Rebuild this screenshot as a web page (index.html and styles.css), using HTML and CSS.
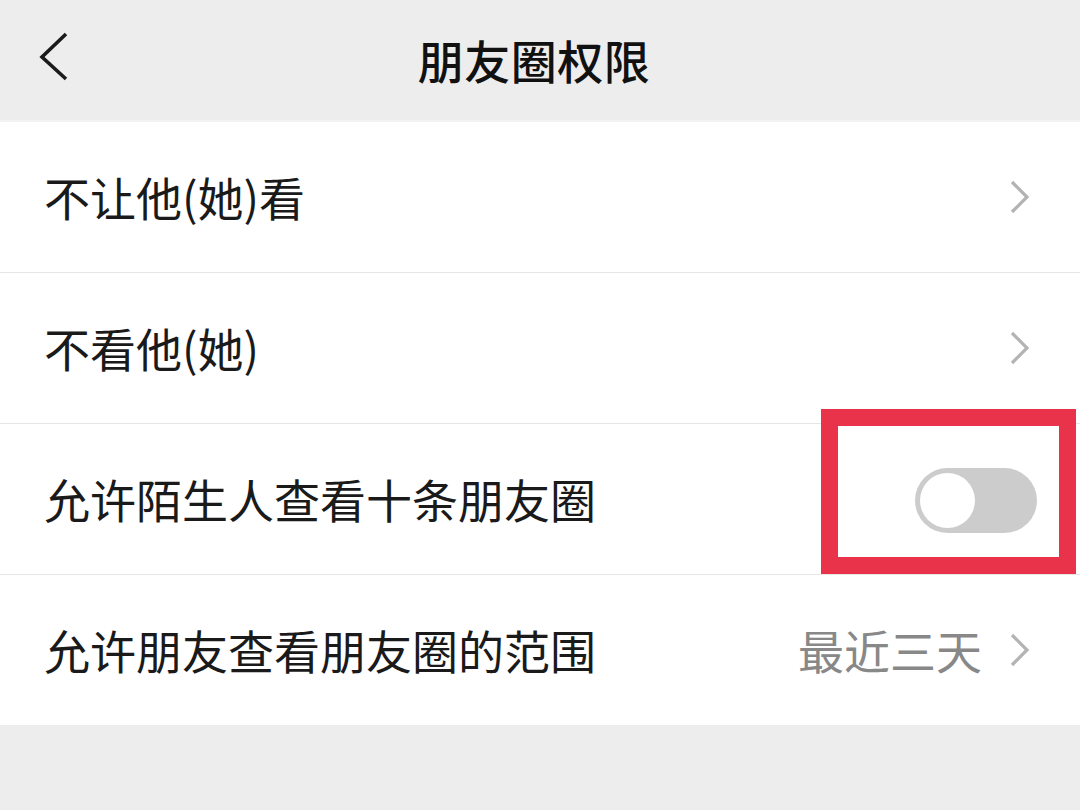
FILE: index.html
```html
<!DOCTYPE html>
<html lang="zh-CN">
<head>
    <meta charset="UTF-8">
    <meta name="viewport" content="width=device-width, initial-scale=1.0">
    <title>朋友圈权限</title>
    <link rel="stylesheet" href="styles.css">
</head>
<body>
    <header class="top-bar">
        <span class="back">
            <svg width="40" height="60" viewBox="0 0 40 60">
                <polyline points="27,13 3,36 27,58" fill="none" stroke="#1b1b1b" stroke-width="3.6" stroke-linejoin="miter"/>
            </svg>
        </span>
        <h1>朋友圈权限</h1>
    </header>

    <div class="list">
        <div class="row">
            <span class="label">不让他(她)看</span>
            <span class="arrow">
                <svg width="24" height="40" viewBox="0 0 24 40">
                    <polyline points="4,5 19,20 4,35" fill="none" stroke="#b3b3b3" stroke-width="3.2"/>
                </svg>
            </span>
        </div>
        <div class="row">
            <span class="label">不看他(她)</span>
            <span class="arrow">
                <svg width="24" height="40" viewBox="0 0 24 40">
                    <polyline points="4,5 19,20 4,35" fill="none" stroke="#b3b3b3" stroke-width="3.2"/>
                </svg>
            </span>
        </div>
        <div class="row row-switch">
            <span class="label">允许陌生人查看十条朋友圈</span>
            <span class="switch"><span class="knob"></span></span>
            <span class="highlight"></span>
        </div>
        <div class="row">
            <span class="label">允许朋友查看朋友圈的范围</span>
            <span class="value">最近三天</span>
            <span class="arrow">
                <svg width="24" height="40" viewBox="0 0 24 40">
                    <polyline points="4,5 19,20 4,35" fill="none" stroke="#b3b3b3" stroke-width="3.2"/>
                </svg>
            </span>
        </div>
    </div>
</body>
</html>
```

FILE: styles.css
```css
body {
    margin: 0;
    background-color: #ededed;
    font-family: "Noto Sans CJK SC", "Noto Sans", sans-serif;
    color: #1a1a1a;
    overflow: hidden;
}
.top-bar {
    height: 120px;
    border-bottom: 2px solid #f3f3f3;
    display: flex;
    align-items: center;
    justify-content: center;
    position: relative;
}
.top-bar h1 {
    margin: 0 12px 0 0;
    font-size: 46px;
    font-weight: 500;
    color: #111;
    letter-spacing: 0.5px;
    margin-top: -2px;
}
.back {
    position: absolute;
    left: 39px;
    top: 21px;
}
.list {
    background-color: #fff;
}
.row {
    height: 150px;
    display: flex;
    align-items: center;
    padding: 0 46px 0 44px;
    position: relative;
    border-bottom: 1px solid #e6e6e6;
}
.row:last-child {
    border-bottom: none;
}
.label {
    flex: 1;
    font-size: 46px;
    color: #1a1a1a;
    margin-top: -2px;
}
.value {
    font-size: 46px;
    color: #888;
    margin-right: 26px;
    margin-top: -2px;
}
.arrow {
    display: flex;
    margin-right: 2px;
}
.arrow svg {
    display: block;
}
.switch {
    width: 122px;
    height: 65px;
    border-radius: 33px;
    background-color: #cccccc;
    margin-right: -3px;
    margin-top: 3px;
    display: flex;
    align-items: center;
    padding-left: 5px;
    box-sizing: border-box;
}
.knob {
    width: 55px;
    height: 55px;
    border-radius: 50%;
    background-color: #fff;
}
.highlight {
    position: absolute;
    left: 821px;
    top: -15px;
    width: 255px;
    height: 165px;
    border: 17px solid #e8334a;
    box-sizing: border-box;
}
```
